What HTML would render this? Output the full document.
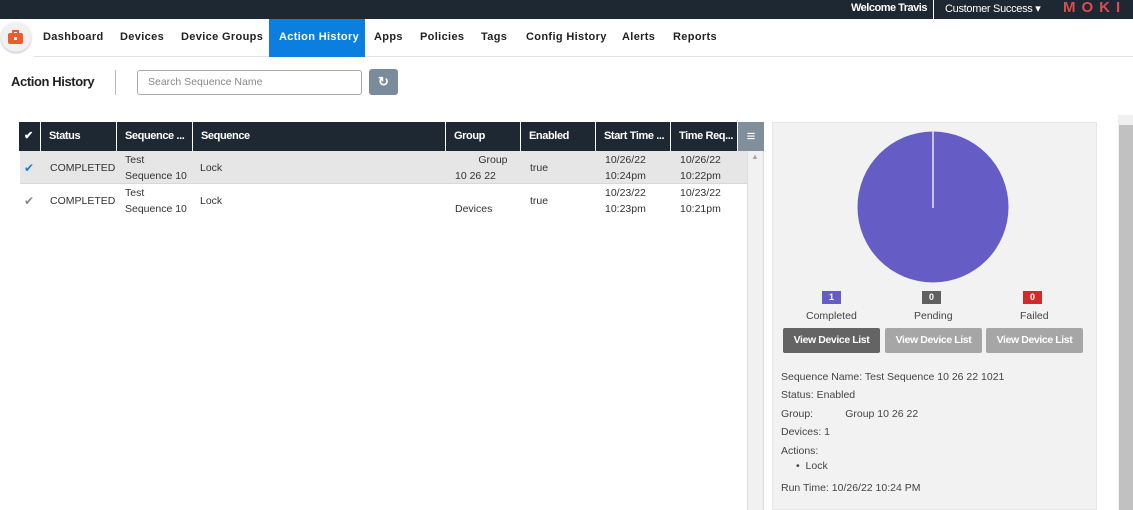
<!DOCTYPE html>
<html><head><meta charset="utf-8"><style>
*{margin:0;padding:0;box-sizing:border-box}
body{width:1133px;height:510px;overflow:hidden;background:#fff;font-family:"Liberation Sans",sans-serif;position:relative;color:#333}
.a{position:absolute;white-space:nowrap}
.top{left:0;top:0;width:1133px;height:19px;background:#1d2833}
.nav{left:34px;top:19px;width:1099px;height:38px;background:#fff;border-bottom:1px solid #e2e2e2}
.ni{top:31px;font-size:11px;font-weight:bold;letter-spacing:.35px;color:#222}
.th{top:122px;height:29px;background:#1d2833;color:#fff;font-size:11px;font-weight:bold;line-height:29px;padding-left:8px;border-right:1px solid #fff;letter-spacing:-.4px}
.td{font-size:10.5px;color:#333;line-height:16px}
.pc{font-size:10.5px;color:#444}
.btn{top:328px;height:25px;width:97px;border-radius:2px;color:#fff;font-size:10.5px;font-weight:bold;text-align:center;line-height:25px;letter-spacing:-.4px}
.badge{top:291px;height:13px;width:19px;color:#fff;font-size:9px;font-weight:bold;text-align:center;line-height:13px}
</style></head><body>
<div class="a top"></div>
<div class="a" style="left:851px;top:2px;font-size:11px;font-weight:bold;color:#fff;letter-spacing:-.5px">Welcome Travis</div>
<div class="a" style="left:933px;top:0;width:1px;height:19px;background:#fff"></div>
<div class="a" style="left:945px;top:2px;font-size:11px;color:#fff;letter-spacing:-.3px">Customer Success ▾</div>
<div class="a" style="left:1063px;top:-1px;font-size:15px;font-weight:bold;color:#e04b4b;letter-spacing:6px">MOKI</div>
<div class="a nav"></div>
<div class="a" style="left:0;top:19px;width:34px;height:39px;background:#fff"></div>
<div class="a" style="left:1px;top:22px;width:30px;height:30px;border-radius:50%;background:#f1f1f1;box-shadow:0 1px 2px #bbb"></div>
<div class="a" style="left:8px;top:33px;width:15px;height:11px;background:#ef5a2f;border-radius:2px"></div>
<div class="a" style="left:12px;top:30px;width:7px;height:4px;border:2px solid #ef5a2f;border-bottom:none"></div>
<div class="a" style="left:14px;top:37px;width:3px;height:3px;background:#fff"></div>
<div class="a" style="left:269px;top:19px;width:96px;height:38px;background:#0a7fe0"></div>
<div class="a ni" style="left:43px">Dashboard</div>
<div class="a ni" style="left:120px">Devices</div>
<div class="a ni" style="left:181px">Device Groups</div>
<div class="a ni" style="left:279px;color:#fff">Action History</div>
<div class="a ni" style="left:374px">Apps</div>
<div class="a ni" style="left:420px">Policies</div>
<div class="a ni" style="left:481px">Tags</div>
<div class="a ni" style="left:526px">Config History</div>
<div class="a ni" style="left:622px">Alerts</div>
<div class="a ni" style="left:673px">Reports</div>

<div class="a" style="left:11px;top:74px;font-size:13px;font-weight:bold;color:#222;letter-spacing:-.4px">Action History</div>
<div class="a" style="left:115px;top:70px;width:1px;height:25px;background:#bbb"></div>
<div class="a" style="left:137px;top:70px;width:225px;height:25px;border:1px solid #aaa;border-radius:3px;font-size:10.5px;color:#888;line-height:23px;padding-left:10px">Search Sequence Name</div>
<div class="a" style="left:369px;top:69px;width:29px;height:26px;background:#7a8c9c;border-radius:3px;color:#fff;font-size:13px;font-weight:bold;text-align:center;line-height:26px">↻</div>

<div class="a" style="left:747px;top:151px;width:17px;height:359px;background:#f1f1f1;border-left:1px solid #ddd;border-right:1px solid #ddd"></div>
<div class="a" style="left:751px;top:152px;font-size:8px;color:#aaa">▲</div>
<div class="a th" style="left:19px;width:22px;padding-left:5px">✔</div>
<div class="a th" style="left:41px;width:76px">Status</div>
<div class="a th" style="left:117px;width:76px">Sequence ...</div>
<div class="a th" style="left:193px;width:253px">Sequence</div>
<div class="a th" style="left:446px;width:75px">Group</div>
<div class="a th" style="left:521px;width:75px">Enabled</div>
<div class="a th" style="left:596px;width:75px">Start Time ...</div>
<div class="a th" style="left:671px;width:67px">Time Req...</div>
<div class="a" style="left:738px;top:122px;width:26px;height:29px;background:#7f8f9c;color:#fff;font-size:15px;text-align:center;line-height:29px">≡</div>

<div class="a" style="left:20px;top:151px;width:727px;height:33px;background:#e6e6e6;border-bottom:1px solid #d8d8d8"></div>
<div class="a td" style="left:24px;top:160px;color:#1a7fd6;font-size:12px">✔</div>
<div class="a td" style="left:50px;top:160px">COMPLETED</div>
<div class="a td" style="left:125px;top:152px">Test<br>Sequence 10</div>
<div class="a td" style="left:200px;top:160px">Lock</div>
<div class="a td" style="left:455px;top:152px">&nbsp;&nbsp;&nbsp;&nbsp;&nbsp;&nbsp;&nbsp;&nbsp;Group<br>10 26 22</div>
<div class="a td" style="left:530px;top:160px">true</div>
<div class="a td" style="left:605px;top:152px">10/26/22<br>10:24pm</div>
<div class="a td" style="left:680px;top:152px">10/26/22<br>10:22pm</div>

<div class="a td" style="left:24px;top:193px;color:#888;font-size:12px">✔</div>
<div class="a td" style="left:50px;top:193px">COMPLETED</div>
<div class="a td" style="left:125px;top:185px">Test<br>Sequence 10</div>
<div class="a td" style="left:200px;top:193px">Lock</div>
<div class="a td" style="left:455px;top:201px">Devices</div>
<div class="a td" style="left:530px;top:193px">true</div>
<div class="a td" style="left:605px;top:185px">10/23/22<br>10:23pm</div>
<div class="a td" style="left:680px;top:185px">10/23/22<br>10:21pm</div>

<div class="a" style="left:772px;top:122px;width:325px;height:388px;background:#f2f2f2;border:1px solid #e6e6e6"></div>
<svg class="a" style="left:857px;top:131px" width="152" height="152"><circle cx="76" cy="76" r="75.5" fill="#655cc5"/><line x1="76" y1="0" x2="76" y2="77" stroke="#e8e8f0" stroke-width="1.5"/></svg>
<div class="a badge" style="left:822px;background:#655cc5">1</div>
<div class="a badge" style="left:922px;background:#606060">0</div>
<div class="a badge" style="left:1023px;background:#d12a2a">0</div>
<div class="a pc" style="left:806px;top:310px">Completed</div>
<div class="a pc" style="left:914px;top:310px">Pending</div>
<div class="a pc" style="left:1020px;top:310px">Failed</div>
<div class="a btn" style="left:783px;background:#646464">View Device List</div>
<div class="a btn" style="left:885px;background:#a6a6a6">View Device List</div>
<div class="a btn" style="left:986px;background:#a6a6a6">View Device List</div>
<div class="a pc" style="left:781px;top:371px">Sequence Name: Test Sequence 10 26 22 1021</div>
<div class="a pc" style="left:781px;top:389px">Status: Enabled</div>
<div class="a pc" style="left:781px;top:408px">Group:&nbsp;&nbsp;&nbsp;&nbsp;&nbsp;&nbsp;&nbsp;&nbsp;&nbsp;&nbsp;&nbsp;Group 10 26 22</div>
<div class="a pc" style="left:781px;top:426px">Devices: 1</div>
<div class="a pc" style="left:781px;top:445px">Actions:</div>
<div class="a pc" style="left:796px;top:460px">•&nbsp;&nbsp;Lock</div>
<div class="a pc" style="left:781px;top:482px">Run Time: 10/26/22 10:24 PM</div>

<div class="a" style="left:1118px;top:115px;width:15px;height:395px;background:#f0f0f0"></div>
<div class="a" style="left:1119px;top:125px;width:14px;height:385px;background:#c1c1c1"></div>
</body></html>
